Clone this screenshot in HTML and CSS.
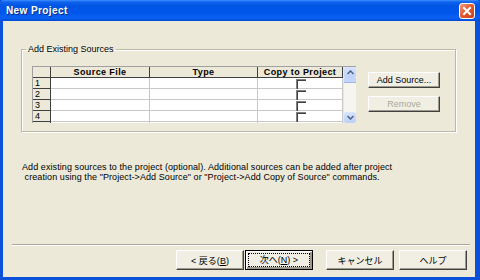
FILE: index.html
```html
<!DOCTYPE html>
<html lang="ja">

<head>
    <meta charset="UTF-8">
    <meta name="viewport" content="width=device-width, initial-scale=1.0">
    <title>New Project</title>

    <link rel="stylesheet" href="styles.css">

</head>

<body>
    <div class="window">
        <div class="titlebar">
            <span class="title">New Project</span>
            <span class="closeBtn">
                <svg width="14" height="14" viewBox="0 0 14 14">
                    <path d="M4 4 L10 10 M10 4 L4 10" stroke="#fff" stroke-width="2" stroke-linecap="square" />
                </svg>
            </span>
        </div>
        <div class="body">
            <fieldset class="group">
                <legend>Add Existing Sources</legend>
                <div class="groupInner">
                    <div class="grid">
                        <div class="cells">
                            <div class="row head">
                                <div class="cell num"></div>
                                <div class="cell src">Source File</div>
                                <div class="cell type">Type</div>
                                <div class="cell copy">Copy to Project</div>
                            </div>
                            <div class="row">
                                <div class="cell num">1</div>
                                <div class="cell src"></div>
                                <div class="cell type"></div>
                                <div class="cell copy"><span class="check"></span></div>
                            </div>
                            <div class="row">
                                <div class="cell num">2</div>
                                <div class="cell src"></div>
                                <div class="cell type"></div>
                                <div class="cell copy"><span class="check"></span></div>
                            </div>
                            <div class="row">
                                <div class="cell num">3</div>
                                <div class="cell src"></div>
                                <div class="cell type"></div>
                                <div class="cell copy"><span class="check"></span></div>
                            </div>
                            <div class="row">
                                <div class="cell num">4</div>
                                <div class="cell src"></div>
                                <div class="cell type"></div>
                                <div class="cell copy"><span class="check"></span></div>
                            </div>
                            <div class="row">
                                <div class="cell num">5</div>
                                <div class="cell src"></div>
                                <div class="cell type"></div>
                                <div class="cell copy"><span class="check"></span></div>
                            </div>
                        </div>
                        <div class="scroll">
                            <div class="arrow">
                                <svg width="7" height="5" viewBox="0 0 7 5"><path d="M0.5 4 L3.5 1 L6.5 4" fill="none" stroke="#4d6185" stroke-width="1.5" /></svg>
                            </div>
                            <div class="thumb"></div>
                            <div class="track"></div>
                            <div class="arrow">
                                <svg width="7" height="5" viewBox="0 0 7 5"><path d="M0.5 1 L3.5 4 L6.5 1" fill="none" stroke="#4d6185" stroke-width="1.5" /></svg>
                            </div>
                        </div>
                    </div>
                    <div class="side">
                        <button class="btn small">Add Source...</button>
                        <button class="btn small" disabled>Remove</button>
                    </div>
                </div>
            </fieldset>

            <p class="desc">Add existing sources to the project (optional). Additional sources can be added after project<br>
                &nbsp;creation using the "Project-&gt;Add Source" or "Project-&gt;Add Copy of Source" commands.</p>

            <div class="sep"></div>

            <div class="buttons">
                <button class="btn">&lt; 戻る(<u>B</u>)</button>
                <button class="btn default"><span class="focus">次へ(<u>N</u>) &gt;</span></button>
                <button class="btn gapLeft">キャンセル</button>
                <button class="btn">ヘルプ</button>
            </div>
        </div>
    </div>
</body>

</html>
```

FILE: styles.css
```css
body {
    margin: 0;
    font-family: "Liberation Sans", "Noto Sans CJK JP", sans-serif;
    font-size: 9px;
    color: #000;
}

.window {
    width: 480px;
    height: 280px;
    display: flex;
    flex-direction: column;
    background: #0a50d8;
}

.titlebar {
    height: 21px;
    display: flex;
    align-items: center;
    justify-content: space-between;
    padding: 0 5px 0 6px;
    background: linear-gradient(#3d8eff 0, #0f62ec 2px, #0054e3 6px, #0057ec 13px, #0a61f2 18px, #0048d4 21px);
    border-radius: 4px 4px 0 0;
}

.title {
    color: #fff;
    font-weight: bold;
    font-size: 10px;
    letter-spacing: 0.4px;
    text-shadow: 1px 1px 0 #0b2c86;
}

.closeBtn {
    width: 14px;
    height: 14px;
    border: 1px solid #fff;
    border-radius: 3px;
    background: linear-gradient(135deg, #f09a7a, #e2582f 50%, #c7401a);
    display: flex;
}

.body {
    flex: 1;
    background: #ece9d8;
    margin: 0 5px 3px 3px;
    padding: 23px 7px 0 18px;
    display: flex;
    flex-direction: column;
}

.group {
    width: 423px;
    margin: 0;
    padding: 12px 0 8px 10px;
    border: 1px solid #bcb8a6;
    box-shadow: inset 1px 1px 0 #fff, 1px 1px 0 #fff;
}

.group legend {
    margin-left: -6px;
    padding: 0 2px;
}

.groupInner {
    display: flex;
    align-items: flex-start;
}

.grid {
    display: flex;
    height: 56px;
    border-top: 1px solid #a0a0a0;
    border-left: 1px solid #a0a0a0;
}

.cells {
    width: 310px;
    height: 56px;
    overflow: hidden;
    background: #fff;
}

.row {
    display: flex;
    height: 11px;
}

.cell {
    box-sizing: border-box;
    height: 11px;
    border-right: 1px solid #c8c8c8;
    border-bottom: 1px solid #c8c8c8;
    line-height: 10px;
}

.num {
    width: 18px;
    background: #ece9d8;
    border-color: #404040;
    padding-left: 2px;
}

.src {
    width: 99px;
}

.type {
    width: 108px;
}

.copy {
    width: 85px;
    display: flex;
    justify-content: center;
    padding-top: 1px;
}

.head .cell {
    background: #ece9d8;
    border-color: #404040;
    font-weight: bold;
    text-align: center;
    letter-spacing: 0.4px;
    display: block;
    padding-top: 0;
}

.check {
    box-sizing: border-box;
    width: 10px;
    height: 10px;
    border-top: 1px solid #808080;
    border-left: 1px solid #808080;
    box-shadow: inset 1px 1px 0 #404040;
    margin-left: 1px;
}

.scroll {
    width: 12px;
    margin-left: 1px;
    display: flex;
    flex-direction: column;
    background: #f6f5f0;
}

.arrow {
    height: 11px;
    display: flex;
    align-items: center;
    justify-content: center;
    background: linear-gradient(#d9e4fd, #bccffa);
    border-radius: 2px;
}

.thumb {
    height: 4px;
    background: #c4d5fb;
    border-bottom: 1px solid #9eb6ef;
}

.track {
    flex: 1;
}

.side {
    margin-left: 12px;
    margin-top: 6px;
    display: flex;
    flex-direction: column;
    gap: 8px;
}

.btn {
    box-sizing: border-box;
    width: 68px;
    height: 20px;
    padding: 0;
    font-family: "Liberation Sans", "Noto Sans CJK JP", sans-serif;
    font-size: 9px;
    color: #000;
    background: #f1efe4;
    border: 1px solid;
    border-color: #fff #404040 #404040 #fff;
    box-shadow: inset -1px -1px 0 #9d9a8c;
}

.btn.small {
    width: 72px;
    height: 16px;
}

.btn:disabled {
    color: #aca899;
}

.btn.default {
    border: 1px solid #000;
    box-shadow: inset 1px 1px 0 #fff, inset -2px -2px 0 #9d9a8c;
}

.focus {
    display: block;
    margin: 2px;
    border: 1px dotted #000;
    line-height: 12px;
}

.desc {
    margin: 30px 0 0 1px;
    font-size: 9px;
    letter-spacing: 0.08px;
    line-height: 10px;
}

.sep {
    margin: auto -2px 0 -9px;
    border-top: 1px solid #aca899;
    border-bottom: 1px solid #fff;
}

.buttons {
    display: flex;
    justify-content: flex-end;
    gap: 1px;
    padding: 4px 1px 7px 0;
}

.gapLeft {
    margin-left: 12px;
    margin-right: 4px;
}
```
